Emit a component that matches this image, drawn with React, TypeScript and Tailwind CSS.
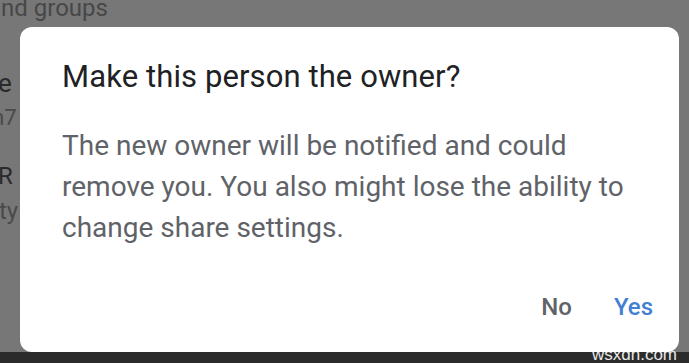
export default function App() {
  return (
    <div
      className="relative w-[689px] h-[363px] overflow-hidden bg-[#777777] flex flex-col"
      style={{ fontFamily: "Roboto, 'Liberation Sans', sans-serif" }}
    >
      {/* dimmed page behind */}
      <div className="flex-1 flex flex-col text-[#3c3c3c]">
        <div className="-ml-[12px] -mt-[9px] text-[24px] leading-[34px] text-[#474747]">and groups</div>
        <div className="mt-[45px] -ml-[2px] text-[26px] leading-[26px] text-[#2a2a2a]">e</div>
        <div className="mt-[10px] -ml-[15px] text-[22px] leading-[24px] text-[#4a4a4a]">m7</div>
        <div className="mt-[32px] -ml-[2px] text-[24px] leading-[28px] text-[#2a2a2a]">R</div>
        <div className="mt-[7px] -ml-[1px] text-[24px] leading-[28px] text-[#4a4a4a]">ty</div>
      </div>
      <div className="h-[11px] bg-[#2b2b2b] relative">
        <span className="absolute right-[12px] -top-[5px] text-[17px] leading-[16px] text-[#e8e8e8]" style={{ fontFamily: "'Liberation Sans', sans-serif" }}>
          wsxdn.com
        </span>
      </div>

      {/* dialog */}
      <div className="absolute left-[20px] top-[27px] w-[659px] h-[325px] bg-white rounded-[12px] flex flex-col pl-[42px] pr-[26px]">
        <div className="mt-[32px] text-[31px] leading-[36px] tracking-[0.1px] text-[#202124]">Make this person the owner?</div>
        <div className="mt-[30px] text-[28px] leading-[41px] text-[#5f6368] w-[575px]">
          The new owner will be notified and could remove you. You also might lose the ability to change share settings.
        </div>
        <div className="mt-auto mb-[31px] flex justify-end items-center gap-[42px] text-[24px] leading-[28px] font-medium">
          <span className="text-[#5f6368]">No</span>
          <span className="text-[#4181d3]">Yes</span>
        </div>
      </div>
    </div>
  );
}
